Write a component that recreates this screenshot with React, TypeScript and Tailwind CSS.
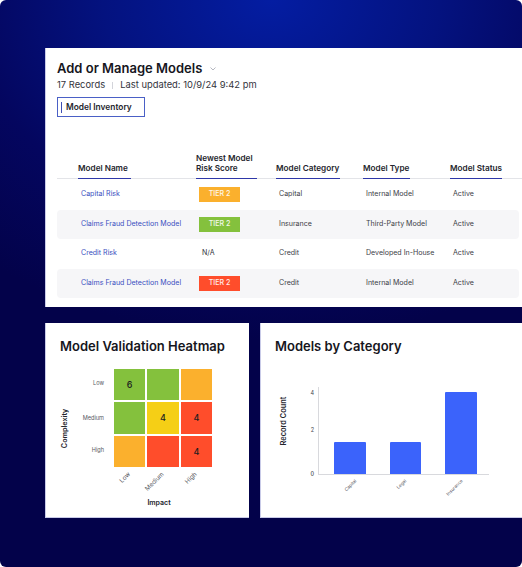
const font = { fontFamily: 'Inter, "Liberation Sans", sans-serif' };

const headers = [
  { label: 'Model Name', cell: 'w-[139px] pl-[21px]', bar: 'w-[53px]' },
  { label: 'Newest Model Risk Score', cell: 'w-[80px]', bar: 'w-[61px]' },
  { label: 'Model Category', cell: 'w-[87px]', bar: 'w-[64px]' },
  { label: 'Model Type', cell: 'w-[87px]', bar: 'w-[47px]' },
  { label: 'Model Status', cell: 'w-[60px]', bar: 'w-[52px]' },
];

const rows = [
  { name: 'Capital Risk', tier: 'bg-[#fbb02d]', category: 'Capital', type: 'Internal Model' },
  { name: 'Claims Fraud Detection Model', tier: 'bg-[#84c13d]', category: 'Insurance', type: 'Third-Party Model' },
  { name: 'Credit Risk', tier: '', category: 'Credit', type: 'Developed In-House' },
  { name: 'Claims Fraud Detection Model', tier: 'bg-[#ff4d2b]', category: 'Credit', type: 'Internal Model' },
];

const heat = [
  ['bg-[#84c13d]', '6'],
  ['bg-[#84c13d]', ''],
  ['bg-[#fbb02d]', ''],
  ['bg-[#84c13d]', ''],
  ['bg-[#f5cf16]', '4'],
  ['bg-[#ff4d2b]', '4'],
  ['bg-[#fbb02d]', ''],
  ['bg-[#ff4d2b]', ''],
  ['bg-[#ff4d2b]', '4'],
];

function Table() {
  return (
    <section className="ml-[45px] h-[259px] bg-white pl-3 pr-[3px] pt-[10px] shadow-[inset_1px_0_0_#c9cbe8]">
      <div className="flex items-center">
        <h1 className="text-[13px] leading-[20px] font-semibold text-[#16161d]">Add or Manage Models</h1>
        <svg className="ml-[8px] mt-px" width="6" height="4" viewBox="0 0 6 4" fill="none">
          <path d="M0.5 0.5 3 3 5.5 0.5" stroke="#b5b7c0" strokeWidth="1" />
        </svg>
      </div>
      <div className="-mt-px flex h-[16px] items-center text-[9.4px] text-[#33343c]">
        <span>17 Records</span>
        <span className="mx-[7px] h-[7px] w-px bg-[#d3d4da]" />
        <span>Last updated: 10/9/24 9:42 pm</span>
      </div>
      <div className="mt-[4px] flex h-[20px] w-[88px] items-center border border-[#4a60c6] pl-[3px]">
        <span className="h-[11px] w-px bg-[#3f4fb5]" />
        <span className="ml-[4px] text-[8.4px] font-semibold text-[#24252d]">Model Inventory</span>
      </div>
      <div className="-mr-[3px] mt-[32px] flex h-[30px] items-end border-b border-[#e3e4e8]">
        {headers.map((h) => (
          <div key={h.label} className={`-mb-px shrink-0 ${h.cell}`}>
            <div className={`text-[8.2px] leading-[10px] font-semibold text-[#24252d] ${h.bar === 'w-[61px]' ? 'w-[70px]' : ''}`}>{h.label}</div>
            <div className={`mt-[5px] h-px ${h.bar} bg-[#2e37a8]`} />
          </div>
        ))}
      </div>
      <div className="mt-[1px]">
        {rows.map((r, i) => (
          <div key={i} className={`flex h-[29.5px] items-center text-[7.05px] text-[#3d3e47] ${i % 2 ? 'rounded-sm bg-[#f6f6f8]' : ''}`}>
            <div className="w-[139px] shrink-0 whitespace-nowrap pl-[24px] text-[#3a4fc0]">{r.name}</div>
            <div className="w-[80px] shrink-0 pl-[3px]">
              {r.tier ? (
                <span className={`flex h-[15px] w-[41px] items-center justify-center text-[7.05px] font-medium text-white/90 ${r.tier}`}>TIER 2</span>
              ) : (
                <span className="ml-[3px] text-[#33343c]">N/A</span>
              )}
            </div>
            <div className="w-[87px] shrink-0 pl-[3px]">{r.category}</div>
            <div className="w-[87px] shrink-0 whitespace-nowrap pl-[3px]">{r.type}</div>
            <div className="pl-[3px]">Active</div>
          </div>
        ))}
      </div>
    </section>
  );
}

function Heatmap() {
  return (
    <section className="h-[195px] w-[204px] bg-white pl-[15px] pt-[14px] shadow-[inset_1px_0_0_#c9cbe8,inset_0_-1px_0_#c9cbe8]">
      <h2 className="text-[13px] leading-[18px] font-semibold text-[#16161d]">Model Validation Heatmap</h2>
      <div className="mt-[14px] flex">
        <div className="flex h-[98px] w-[12px] items-center justify-center">
          <span className="translate-y-[10px] -rotate-90 whitespace-nowrap text-[7.2px] font-semibold text-[#24252d]">Complexity</span>
        </div>
        <div className="flex h-[98px] w-[32px] flex-col justify-around text-right text-[5.6px] text-[#55565e]">
          <span className="-translate-y-[2px]">Low</span>
          <span>Medium</span>
          <span>High</span>
        </div>
        <div className="ml-[10px] grid h-[98px] w-[98px] grid-cols-3 grid-rows-3 gap-[2px]">
          {heat.map(([c, v], i) => (
            <div key={i} className={`flex items-center justify-center text-[9px] font-medium text-[#1c1c20] ${c}`}>{v}</div>
          ))}
        </div>
      </div>
      <div className="ml-[54px] flex h-[31px] w-[98px] gap-[2px] pt-[4px]">
        {['Low', 'Medium', 'High'].map((t) => (
          <div key={t} className="flex h-[8px] w-[31.3px] justify-end pr-[18px]">
            <span className="origin-top-right -rotate-45 whitespace-nowrap text-[6.2px] leading-none text-[#55565e]">{t}</span>
          </div>
        ))}
      </div>
      <div className="ml-[54px] w-[90px] text-center text-[7px] leading-[10px] font-semibold text-[#24252d]">Impact</div>
    </section>
  );
}

function BarChart() {
  const bars = [
    { label: 'Capital', h: 'h-[32px]', pr: 'pr-[11px]' },
    { label: 'Legal', h: 'h-[32px]', pr: 'pr-[16.5px]' },
    { label: 'Insurance', h: 'h-[82px]', pr: 'pr-[16px]' },
  ];
  return (
    <section className="h-[195px] w-[262px] bg-white pl-[15px] pt-[14px] shadow-[inset_1px_0_0_#c9cbe8,inset_0_-1px_0_#c9cbe8]">
      <h2 className="text-[13px] leading-[18px] font-semibold text-[#16161d]">Models by Category</h2>
      <div className="mt-[32px] flex">
        <div className="ml-[2px] flex h-[87px] w-[12px] items-center justify-center">
          <span className="-translate-y-[9.5px] -rotate-90 whitespace-nowrap text-[7.4px] font-semibold text-[#24252d]">Record Count</span>
        </div>
        <div className="ml-[15px] flex h-[87px] w-[10px] flex-col pt-[3px] text-right text-[5.5px] leading-[6px] text-[#44454d]">
          <span>4</span>
          <span className="mt-[31px]">2</span>
          <span className="mt-[38px] font-medium">0</span>
        </div>
        <div className="ml-[4px] flex h-[88px] w-[171px] items-end gap-[24px] border-b border-l border-[#d8d9dd] pl-[15px]">
          {bars.map((b) => (
            <div key={b.label} className={`w-[31.5px] rounded-t-[1px] bg-[#3b63fb] ${b.h}`} />
          ))}
        </div>
      </div>
      <div className="ml-[59px] flex gap-[24px] pt-[4px]">
        {bars.map((b) => (
          <div key={b.label} className={`flex h-[8px] w-[31.5px] justify-end ${b.pr}`}>
            <span className="origin-top-right -rotate-45 whitespace-nowrap text-[4.5px] leading-none text-[#55565e]">{b.label}</span>
          </div>
        ))}
      </div>
    </section>
  );
}

export default function App() {
  return (
    <div
      className="h-[567px] w-[522px] overflow-hidden rounded-md bg-[radial-gradient(ellipse_85%_60%_at_52%_0%,#041da2_0%,#04127f_38%,#04065f_68%,#03024a_100%)] pt-[48px]"
      style={font}
    >
      <Table />
      <div className="ml-[45px] mt-[16px] flex gap-[11px]">
        <Heatmap />
        <BarChart />
      </div>
    </div>
  );
}
